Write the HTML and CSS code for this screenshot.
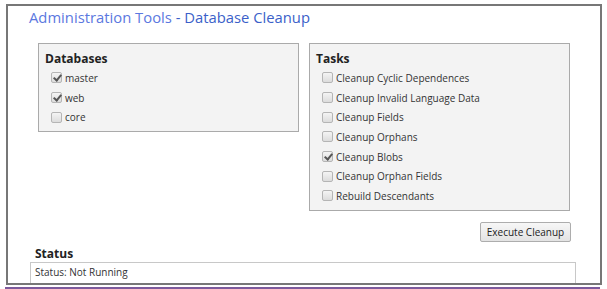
FILE: index.html
```html
<!DOCTYPE html>
<html lang="en">
<head>
    <meta charset="UTF-8">
    <title>Database Cleanup</title>
    <link rel="stylesheet" href="styles.css">
</head>
<body>
    <div class="frame">
        <h1><a href="#">Administration Tools</a> - Database Cleanup</h1>

        <div class="panels">
            <div class="panel databases">
                <h2>Databases</h2>
                <label class="option"><span class="box checked"></span>master</label>
                <label class="option"><span class="box checked"></span>web</label>
                <label class="option"><span class="box"></span>core</label>
            </div>

            <div class="panel tasks">
                <h2>Tasks</h2>
                <label class="option"><span class="box"></span>Cleanup Cyclic Dependences</label>
                <label class="option"><span class="box"></span>Cleanup Invalid Language Data</label>
                <label class="option"><span class="box"></span>Cleanup Fields</label>
                <label class="option"><span class="box"></span>Cleanup Orphans</label>
                <label class="option"><span class="box checked"></span>Cleanup Blobs</label>
                <label class="option"><span class="box"></span>Cleanup Orphan Fields</label>
                <label class="option"><span class="box"></span>Rebuild Descendants</label>
            </div>
        </div>

        <div class="actions">
            <button class="execute-btn">Execute Cleanup</button>
        </div>

        <div class="status">
            <h3>Status</h3>
            <div class="status-box">Status: Not Running</div>
        </div>
    </div>
    <div class="underline"></div>
</body>
</html>
```

FILE: styles.css
```css
* {
    margin: 0;
    padding: 0;
    box-sizing: border-box;
}

body {
    font-family: 'Open Sans', 'Liberation Sans', sans-serif;
    color: #333;
    background: #fff;
}

.frame {
    margin: 4px 0 0 6px;
    width: 596px;
    height: 281px;
    border: 2px solid #777;
    overflow: hidden;
}

.frame h1 {
    font-size: 14.8px;
    font-weight: 400;
    line-height: 20px;
    color: #3b5fc9;
    margin: 1px 0 0 21px;
}

.frame h1 a {
    color: #5b78e0;
    text-decoration: none;
}

.panels {
    display: flex;
    align-items: flex-start;
    gap: 10px;
    margin: 16px 0 0 30px;
}

.panel {
    width: 261px;
    background-color: #f3f3f3;
    border: 1px solid #aaa;
    padding: 7px 6px 4px;
}

.panel h2 {
    font-size: 12px;
    font-weight: 700;
    line-height: 16px;
    color: #222;
    margin-bottom: 1px;
}

.option {
    display: flex;
    align-items: center;
    height: 19.7px;
    padding-left: 6px;
    font-size: 10px;
    color: #333;
}

.box {
    width: 11px;
    height: 11px;
    margin-right: 3px;
    border: 1px solid #b5b5b5;
    border-radius: 2px;
    background: linear-gradient(#f4f4f4, #dcdcdc);
    position: relative;
}

.box.checked::after {
    content: '';
    position: absolute;
    left: 3px;
    top: 0px;
    width: 3px;
    height: 6px;
    border: solid #555;
    border-width: 0 2px 2px 0;
    transform: rotate(40deg);
}

.actions {
    display: flex;
    justify-content: flex-end;
    margin: 11px 29px 0 0;
}

.execute-btn {
    font-family: 'Open Sans', 'Liberation Sans', sans-serif;
    font-size: 10px;
    color: #222;
    height: 20px;
    width: 91px;
    border: 1px solid #adadad;
    border-radius: 2px;
    background: linear-gradient(#f7f7f7, #e3e3e3);
}

.status {
    margin: 4px 24px 0 22px;
}

.status h3 {
    font-size: 12px;
    font-weight: 700;
    line-height: 16px;
    color: #222;
    padding-left: 5px;
}

.status-box {
    border: 1px solid #c8c8c8;
    height: 40px;
    padding: 2px 4px;
    font-size: 10px;
    line-height: 14px;
}

.underline {
    margin: 2px 0 0 5px;
    width: 595px;
    height: 2px;
    background-color: #7d5a9c;
}
```
